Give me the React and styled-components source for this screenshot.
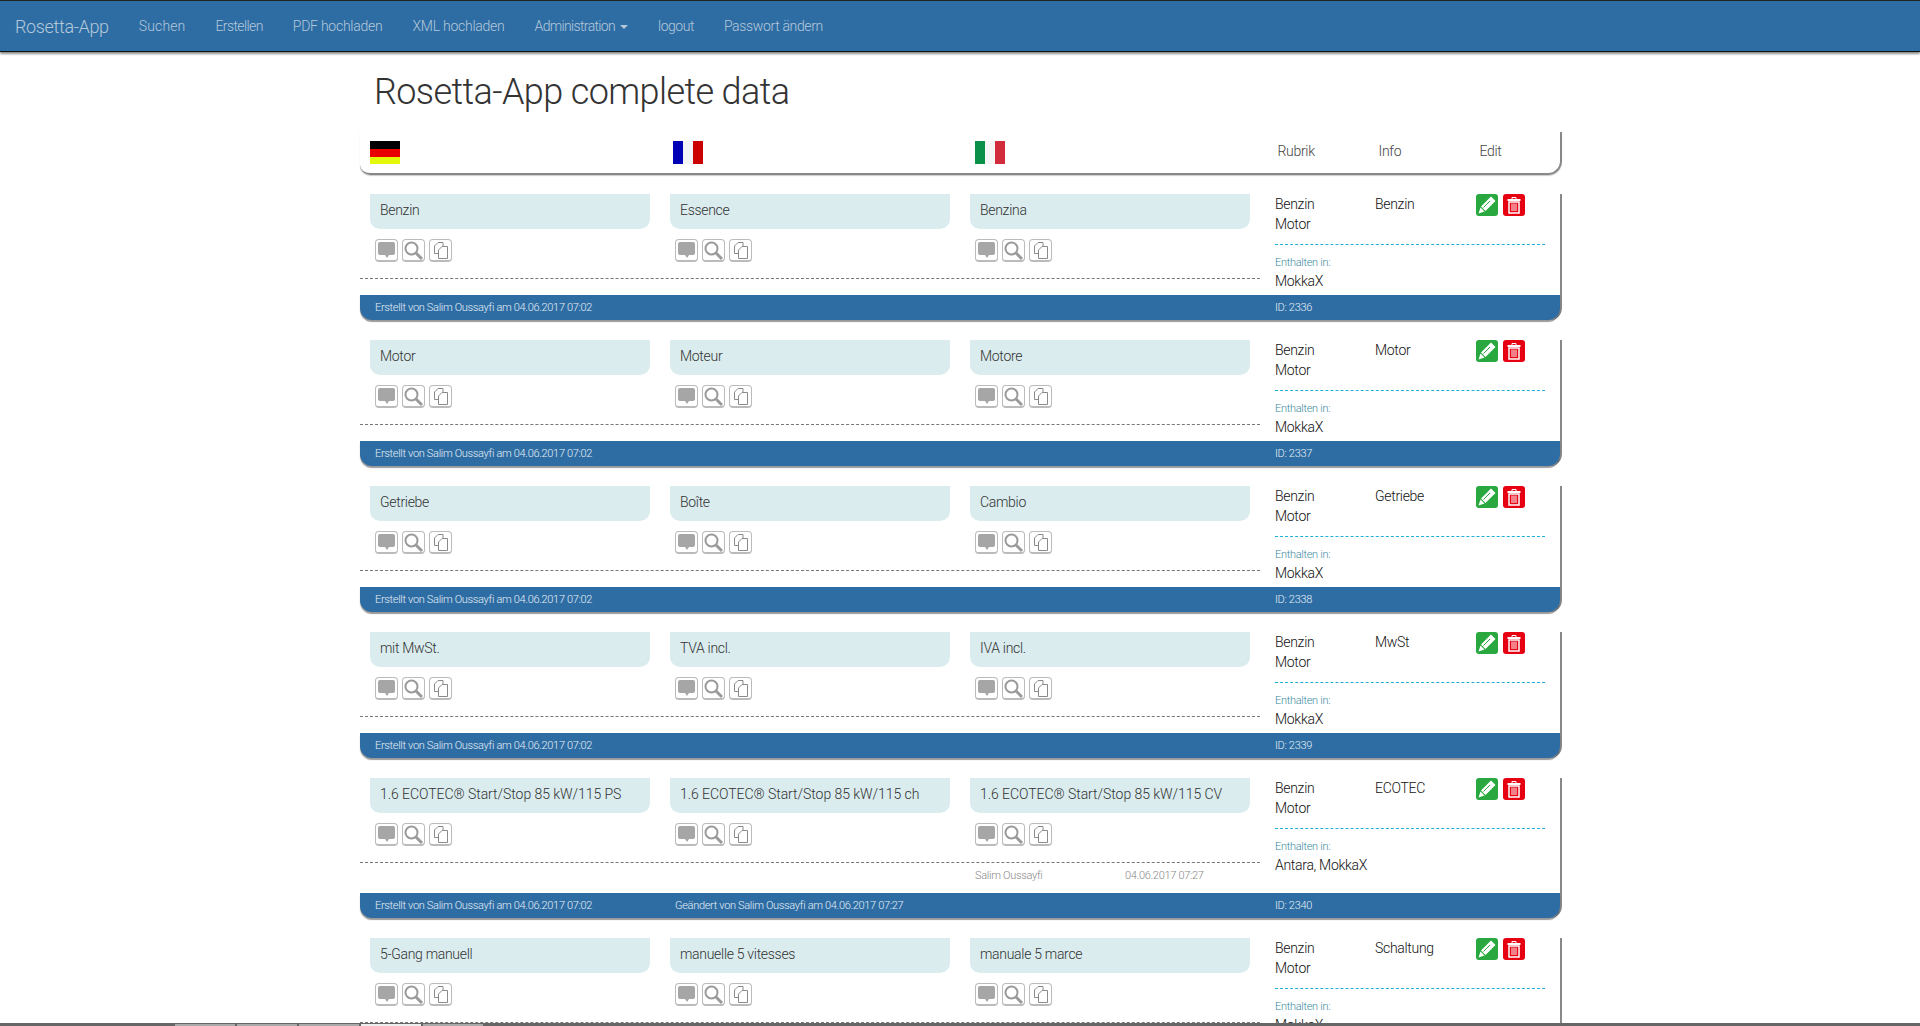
import React from 'react';
import styled, { createGlobalStyle } from 'styled-components';

const Global = createGlobalStyle`
  html, body { margin: 0; padding: 0; height: 1026px; overflow: hidden; background: #fff; }
  body { font-family: Roboto, "Liberation Sans", Arial, sans-serif; font-weight: 300; color: #333; }
  * { box-sizing: border-box; }
`;

const Page = styled.div`
  height: 1026px;
  overflow: hidden;
  position: relative;
`;
const Nav = styled.nav`
  height: 52px;
  background: #2e6da4;
  border-top: 1px solid #222;
  border-bottom: 1px solid #111;
  box-shadow: 0 2px 2px rgba(0,0,0,.45);
  display: flex;
  align-items: center;
  padding-left: 15px;
  color: #b4c8da;
  font-size: 14px;
`;
const Brand = styled.span`
  font-size: 18px;
  margin-right: 30px;
  letter-spacing: -0.35px;
`;
const NavLink = styled.span`
  margin-right: 30px;
  white-space: nowrap;
  letter-spacing: ${p => p.$track ?? -0.3}px;
`;
const Caret = styled.i`
  display: inline-block;
  margin-left: 5px;
  vertical-align: middle;
  border-top: 4px solid;
  border-left: 4px solid transparent;
  border-right: 4px solid transparent;
`;
const Container = styled.div`
  width: 1202px;
  margin: 0 0 0 360px;
`;
const Title = styled.h1`
  font-size: 36px;
  font-weight: 300;
  letter-spacing: -0.6px;
  line-height: 40px;
  margin: 20px 0 0 14px;
  color: #333;
`;
const Head = styled.div`
  display: grid;
  grid-template-columns: repeat(3, 302.5px) 101px 101px 1fr;
  margin: 20px 0 19px;
  height: 43px;
  border-bottom: 2px solid #888;
  border-right: 2px solid #888;
  border-bottom-left-radius: 10px;
  border-bottom-right-radius: 14px;
  box-shadow: 0 1px 1px rgba(0,0,0,.2);
  font-size: 14px;
  letter-spacing: -0.3px;
  color: #444;
  align-items: start;
`;
const FlagCell = styled.div`
  padding: 9px 0 0 10px;
`;
const HeadText = styled.div`
  padding: 11px 0 0 10px;
`;
const Row = styled.div`
  margin-bottom: 20px;
  border-right: 2px solid #888;
  border-bottom-right-radius: 12px;
  border-bottom-left-radius: 12px;
  display: flex;
  flex-direction: column;
`;
const RowBody = styled.div`
  display: grid;
  grid-template-columns: 900px 1fr;
`;
const LeftWrap = styled.div`
  display: grid;
  grid-template-columns: repeat(3, 300px);
  grid-template-rows: 84px auto;
  align-content: start;
  padding-bottom: ${p => (p.$changed ? 0 : 16)}px;
`;
const Lang = styled.div`
  padding: 0 0 0 10px;
`;
const Term = styled.div`
  width: 280px;
  height: 35px;
  background: #daecee;
  border-bottom-left-radius: 10px;
  border-bottom-right-radius: 10px;
  padding: 6px 10px;
  font-size: 14px;
  line-height: 20px;
  letter-spacing: ${p => (p.$long ? -0.06 : -0.3)}px;
  color: #333;
  white-space: nowrap;
`;
const Tools = styled.div`
  display: flex;
  gap: 4px;
  margin: 10px 0 0 5px;
`;
const Tool = styled.span`
  width: 23px;
  height: 23px;
  border: 1px solid #bbb;
  border-radius: 4px;
  border-bottom-width: 2px;
  display: flex;
  align-items: center;
  justify-content: center;
`;
const Info = styled.div`
  padding: 0 15px;
  font-size: 14px;
  letter-spacing: -0.3px;
  color: #111;
  line-height: 20px;
`;
const InfoTop = styled.div`
  display: grid;
  grid-template-columns: 100px 101px 1fr;
  height: 51px;
  border-bottom: 1px dashed #1fb0d8;
`;
const Buttons = styled.div`
  display: flex;
  gap: 5px;
`;
const ActionBtn = styled.span`
  width: 22px;
  height: 22px;
  border-radius: 3px;
  background: ${p => p.$bg};
  display: flex;
  align-items: center;
  justify-content: center;
`;
const Contained = styled.div`
  font-size: 11px;
  color: #3c8aa0;
  margin: 11px 0 1px;
  line-height: 14px;
`;
const Dotted = styled.div`
  grid-column: 1 / 4;
  border-top: 1px dashed #777;
  height: 1px;
`;
const Changed = styled.div`
  grid-column: 3 / 4;
  display: flex;
  font-size: 11px;
  color: #888;
  padding: 6px 0 0 15px;
  height: 30px;
  letter-spacing: -0.3px;
`;
const ChangedName = styled.span`
  width: 150px;
`;
const Foot = styled.div`
  display: grid;
  grid-template-columns: 300px 600px 1fr;
  height: 25px;
  background: #2e6da4;
  color: #e4edf5;
  font-size: 11px;
  letter-spacing: -0.32px;
  align-items: center;
  border-bottom-left-radius: 12px;
  border-bottom-right-radius: 12px;
  box-shadow: 0 2px 1px rgba(0,0,0,.4);
`;
const FootCell = styled.div`
  padding-left: 15px;
`;
const BottomBar = styled.div`
  position: absolute;
  left: 0;
  right: 0;
  bottom: 0;
  height: 3px;
  background: #666;
  display: flex;
  gap: 2px;
  padding: 1px 0 0 175px;
`;
const TaskTab = styled.span`
  width: 60px;
  background: ${p => (p.$active ? '#eee' : '#aaa')};
`;

const Bubble = () => (
  <svg width="17" height="16" viewBox="0 0 17 16"><path fill="#a6a6a6" d="M2 0h13a2 2 0 0 1 2 2v9a2 2 0 0 1-2 2h-4l-2 3-2-3H2a2 2 0 0 1-2-2V2a2 2 0 0 1 2-2z"/></svg>
);
const Lens = () => (
  <svg width="19" height="19" viewBox="0 0 19 19" fill="none" stroke="#9a9a9a"><circle cx="7.5" cy="7.5" r="6" strokeWidth="2"/><path d="M12 12 18 18" strokeWidth="3"/></svg>
);
const Copy = () => (
  <svg width="14" height="17" viewBox="0 0 14 17" fill="#fff" stroke="#8a8a8a" strokeWidth="1"><path d="M.5 4 4 .5h5v11H.5z"/><path d="M4.500 8 8 4.500h5.500v12H4.500z"/></svg>
);
const Pencil = () => (
  <svg width="18" height="18" viewBox="0 0 18 18"><path fill="#fff" d="M13 .5 17.500 5 7.500 15 3 10.500z"/><path fill="#fff" d="M2.500 11.500 6.500 15.500 .5 17.500z"/><path stroke="#28a83e" strokeWidth="1" d="M12 5 5.500 11.500"/></svg>
);
const Trash = () => (
  <svg width="14" height="17" viewBox="0 0 14 17" fill="none" stroke="#fff"><path d="M.5 3h13" strokeWidth="2"/><path d="M5 2.500V.5h4v2" strokeWidth="1"/><rect x="2" y="5" width="10" height="11" strokeWidth="1.500"/><path d="M5 6.500v7.500M7 6.500v7.500M9 6.500v7.500" strokeWidth="1"/></svg>
);

const DE = () => (
  <svg width="30" height="23" viewBox="0 0 30 23"><rect width="30" height="8" fill="#000"/><rect y="8" width="30" height="8" fill="#e80000"/><rect y="16" width="30" height="7" fill="#e4f80c"/></svg>
);
const FR = () => (
  <svg width="30" height="23" viewBox="0 0 30 23"><rect width="10" height="23" fill="#0000b4"/><rect x="10" width="10" height="23" fill="#f4f4f6"/><rect x="20" width="10" height="23" fill="#cc0000"/></svg>
);
const IT = () => (
  <svg width="30" height="23" viewBox="0 0 30 23"><rect width="10" height="23" fill="#0a9048"/><rect x="10" width="10" height="23" fill="#f6f6f6"/><rect x="20" width="10" height="23" fill="#d22b3c"/></svg>
);

const rows = [
  { de: 'Benzin', fr: 'Essence', it: 'Benzina', info: 'Benzin', used: 'MokkaX', id: 2336 },
  { de: 'Motor', fr: 'Moteur', it: 'Motore', info: 'Motor', used: 'MokkaX', id: 2337 },
  { de: 'Getriebe', fr: 'Boîte', it: 'Cambio', info: 'Getriebe', used: 'MokkaX', id: 2338 },
  { de: 'mit MwSt.', fr: 'TVA incl.', it: 'IVA incl.', info: 'MwSt', used: 'MokkaX', id: 2339 },
  { de: '1.6 ECOTEC® Start/Stop 85 kW/115 PS', fr: '1.6 ECOTEC® Start/Stop 85 kW/115 ch', it: '1.6 ECOTEC® Start/Stop 85 kW/115 CV', info: 'ECOTEC', used: 'Antara, MokkaX', id: 2340, changed: true },
  { de: '5-Gang manuell', fr: 'manuelle 5 vitesses', it: 'manuale 5 marce', info: 'Schaltung', used: 'MokkaX', id: 2341 },
];

const LangCell = ({ text, long }) => (
  <Lang>
    <Term $long={long}>{text}</Term>
    <Tools>
      <Tool><Bubble /></Tool>
      <Tool><Lens /></Tool>
      <Tool><Copy /></Tool>
    </Tools>
  </Lang>
);

export default function App() {
  return (
    <Page>
      <Global />
      <Nav>
        <Brand>Rosetta-App</Brand>
        <NavLink $track={0.15}>Suchen</NavLink>
        <NavLink $track={-0.6}>Erstellen</NavLink>
        <NavLink $track={-0.25}>PDF hochladen</NavLink>
        <NavLink $track={-0.25}>XML hochladen</NavLink>
        <NavLink $track={-0.65}>Administration<Caret /></NavLink>
        <NavLink $track={-0.5}>logout</NavLink>
        <NavLink $track={-0.35}>Passwort ändern</NavLink>
      </Nav>
      <Container>
        <Title>Rosetta-App complete data</Title>
        <Head>
          <FlagCell><DE /></FlagCell>
          <FlagCell><FR /></FlagCell>
          <FlagCell><IT /></FlagCell>
          <HeadText>Rubrik</HeadText>
          <HeadText>Info</HeadText>
          <HeadText>Edit</HeadText>
        </Head>
        {rows.map(r => (
          <Row key={r.id}>
            <RowBody>
              <LeftWrap $changed={r.changed}>
                <LangCell text={r.de} long={r.changed} />
                <LangCell text={r.fr} long={r.changed} />
                <LangCell text={r.it} long={r.changed} />
                <Dotted />
                {r.changed && (
                  <Changed><ChangedName>Salim Oussayfi</ChangedName><span>04.06.2017 07:27</span></Changed>
                )}
              </LeftWrap>
              <Info>
                <InfoTop>
                  <div>Benzin<br />Motor</div>
                  <div>{r.info}</div>
                  <Buttons>
                    <ActionBtn $bg="#28a83e"><Pencil /></ActionBtn>
                    <ActionBtn $bg="#e60012"><Trash /></ActionBtn>
                  </Buttons>
                </InfoTop>
                <Contained>Enthalten in:</Contained>
                <div>{r.used}</div>
              </Info>
            </RowBody>
            <Foot>
              <FootCell>Erstellt von Salim Oussayfi am 04.06.2017 07:02</FootCell>
              <FootCell>{r.changed ? 'Geändert von Salim Oussayfi am 04.06.2017 07:27' : ''}</FootCell>
              <FootCell>ID: {r.id}</FootCell>
            </Foot>
          </Row>
        ))}
      </Container>
      <BottomBar>
        <TaskTab /><TaskTab /><TaskTab /><TaskTab $active /><TaskTab />
      </BottomBar>
    </Page>
  );
}
